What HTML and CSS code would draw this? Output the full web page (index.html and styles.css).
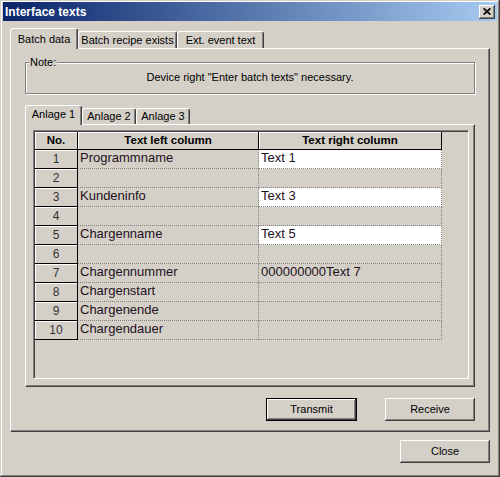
FILE: index.html
```html
<!DOCTYPE html>
<html>
<head>
<meta charset="utf-8">
<title>Interface texts</title>
<link rel="stylesheet" href="styles.css">
</head>
<body>
<div class="window">
  <div class="titlebar">
    <span class="title">Interface texts</span>
    <span class="cap-btn"><svg width="8" height="7" viewBox="0 0 8 7"><path d="M0.6 0.4L7.4 6.6M7.4 0.4L0.6 6.6" stroke="#000" stroke-width="1.7" fill="none"/></svg></span>
  </div>
  <div class="client">
    <div class="tabstrip outer">
      <div class="tab sel w-batch">Batch data</div>
      <div class="tab w-recipe">Batch recipe exists</div>
      <div class="tab w-ext">Ext. event text</div>
    </div>
    <div class="panel outer">
      <div class="group">
        <div class="group-label">Note:</div>
        <div class="group-text">Device right "Enter batch texts" necessary.</div>
      </div>
      <div class="tabstrip inner">
        <div class="tab sel w-a1">Anlage 1</div>
        <div class="tab w-a2">Anlage 2</div>
        <div class="tab w-a3">Anlage 3</div>
      </div>
      <div class="panel inner">
        <div class="gridbox">
          <div class="grid">
            <div class="hc">No.</div>
            <div class="hc">Text left column</div>
            <div class="hc">Text right column</div>

            <div class="rh">1</div>
            <div class="dc">Programmname</div>
            <div class="dc white">Text 1</div>

            <div class="rh">2</div>
            <div class="dc"></div>
            <div class="dc"></div>

            <div class="rh">3</div>
            <div class="dc">Kundeninfo</div>
            <div class="dc white">Text 3</div>

            <div class="rh">4</div>
            <div class="dc"></div>
            <div class="dc"></div>

            <div class="rh">5</div>
            <div class="dc">Chargenname</div>
            <div class="dc white">Text 5</div>

            <div class="rh">6</div>
            <div class="dc"></div>
            <div class="dc"></div>

            <div class="rh">7</div>
            <div class="dc">Chargennummer</div>
            <div class="dc">000000000Text 7</div>

            <div class="rh">8</div>
            <div class="dc">Chargenstart</div>
            <div class="dc"></div>

            <div class="rh">9</div>
            <div class="dc">Chargenende</div>
            <div class="dc"></div>

            <div class="rh">10</div>
            <div class="dc">Chargendauer</div>
            <div class="dc"></div>
          </div>
        </div>
      </div>
      <div class="btnrow">
        <div class="btn default">Transmit</div>
        <div class="btn">Receive</div>
      </div>
    </div>
    <div class="footer">
      <div class="btn">Close</div>
    </div>
  </div>
</div>
</body>
</html>
```
FILE: styles.css
```css
* { box-sizing: border-box; }
html, body { margin: 0; padding: 0; }
body {
  width: 500px;
  height: 477px;
  overflow: hidden;
  background: #d4d0c8;
  font-family: "Liberation Sans", Arial, sans-serif;
  font-size: 11px;
  color: #000;
}
.window {
  width: 500px;
  height: 477px;
  padding: 2px 3px 3px 3px;
  background: #d4d0c8;
  box-shadow: inset -1px -1px 0 #404040, inset 1px 1px 0 #d4d0c8, inset -2px -2px 0 #808080, inset 2px 2px 0 #fff;
  display: flex;
  flex-direction: column;
}
.titlebar {
  height: 19px;
  flex: none;
  background: linear-gradient(to right, #0a246a, #a6caf0);
  display: flex;
  align-items: center;
  justify-content: space-between;
  padding: 0 2px 0 2px;
}
.title {
  color: #fff;
  font-weight: bold;
  font-size: 12px;
  line-height: 14px;
}
.cap-btn {
  width: 16px;
  height: 14px;
  background: #d4d0c8;
  box-shadow: inset -1px -1px 0 #404040, inset 1px 1px 0 #fff, inset -2px -2px 0 #808080;
  display: flex;
  align-items: center;
  justify-content: center;
}
.cap-btn svg { display: block; }
.client {
  flex: 1;
  padding: 7px 7px 0 7px;
  display: flex;
  flex-direction: column;
}
.tabstrip {
  display: flex;
  align-items: flex-end;
  flex: none;
}
.tabstrip.outer { height: 20px; }
.tabstrip.inner { height: 19px; margin-top: 11px; }
.tab {
  position: relative;
  background: #d4d0c8;
  border-top: 1px solid #fff;
  border-left: 1px solid #fff;
  border-right: 1px solid #404040;
  box-shadow: inset -1px 0 0 #808080;
  border-radius: 3px 3px 0 0;
  text-align: center;
  line-height: 13px;
  white-space: nowrap;
}
.outer > .tab { height: 17px; padding-top: 2px; }
.outer > .tab.sel { height: 21px; padding-top: 4px; margin-bottom: -1px; z-index: 1; }
.inner > .tab { height: 16px; padding-top: 1px; }
.inner > .tab.sel { height: 20px; padding-top: 2px; margin-bottom: -1px; z-index: 1; }
.w-batch { width: 68px; }
.w-recipe { width: 99px; }
.w-ext { width: 87px; }
.w-a1 { width: 57px; }
.w-a2 { width: 54px; }
.w-a3 { width: 54px; }

.panel {
  background: #d4d0c8;
  border-top: 1px solid #fff;
  border-left: 1px solid #fff;
  border-right: 1px solid #404040;
  border-bottom: 1px solid #404040;
  box-shadow: inset -1px -1px 0 #808080;
}
.panel.outer {
  height: 384px;
  flex: none;
  padding: 0 14px;
  display: flex;
  flex-direction: column;
}
.group {
  margin-top: 13px;
  height: 32px;
  flex: none;
  border: 1px solid #808080;
  box-shadow: 1px 1px 0 #fff, inset 1px 1px 0 #fff;
  padding: 0 3px;
}
.group-label {
  width: fit-content;
  margin-top: -7px;
  padding: 0 1px;
  line-height: 13px;
  background: #d4d0c8;
}
.group-text {
  margin-top: 2px;
  line-height: 13px;
  text-align: center;
}
.panel.inner {
  height: 263px;
  flex: none;
  padding: 5px 5px 7px 7px;
}
.gridbox {
  height: 100%;
  background: #d4d0c8;
  border-top: 1px solid #808080;
  border-left: 1px solid #808080;
  border-right: 1px solid #fff;
  border-bottom: 1px solid #fff;
  box-shadow: inset 1px 1px 0 #404040;
  padding: 1px 0 0 1px;
}
.grid {
  display: grid;
  grid-template-columns: 43px 181px 183px;
  grid-template-rows: 18px repeat(10, 19px);
  font-family: "Liberation Sans", Arial, sans-serif;
}
.hc, .rh {
  background: #d4d0c8;
  border-right: 1px solid #000;
  border-bottom: 1px solid #000;
  box-shadow: inset 1px 1px 0 #fff;
  text-align: center;
}
.hc {
  font-weight: bold;
  font-size: 11.5px;
  line-height: 17px;
  color: #000;
}
.rh {
  font-size: 12px;
  line-height: 18px;
  color: #333;
}
.dc {
  border-right: 1px dotted #808080;
  border-bottom: 1px dotted #808080;
  padding-left: 2px;
  font-size: 13px;
  line-height: 15px;
  color: #1e101e;
  white-space: nowrap;
}
.dc.white { background: #fff; }

.btnrow {
  display: flex;
  justify-content: flex-end;
  gap: 28px;
  margin-top: 11px;
}
.btn {
  width: 90px;
  height: 23px;
  background: #d4d0c8;
  box-shadow: inset -1px -1px 0 #404040, inset 1px 1px 0 #fff, inset -2px -2px 0 #808080;
  display: flex;
  align-items: center;
  justify-content: center;
  line-height: 13px;
}
.btn.default {
  width: 91px;
  border: 1px solid #000;
}
.footer {
  display: flex;
  justify-content: flex-end;
  margin-top: 8px;
}
```
